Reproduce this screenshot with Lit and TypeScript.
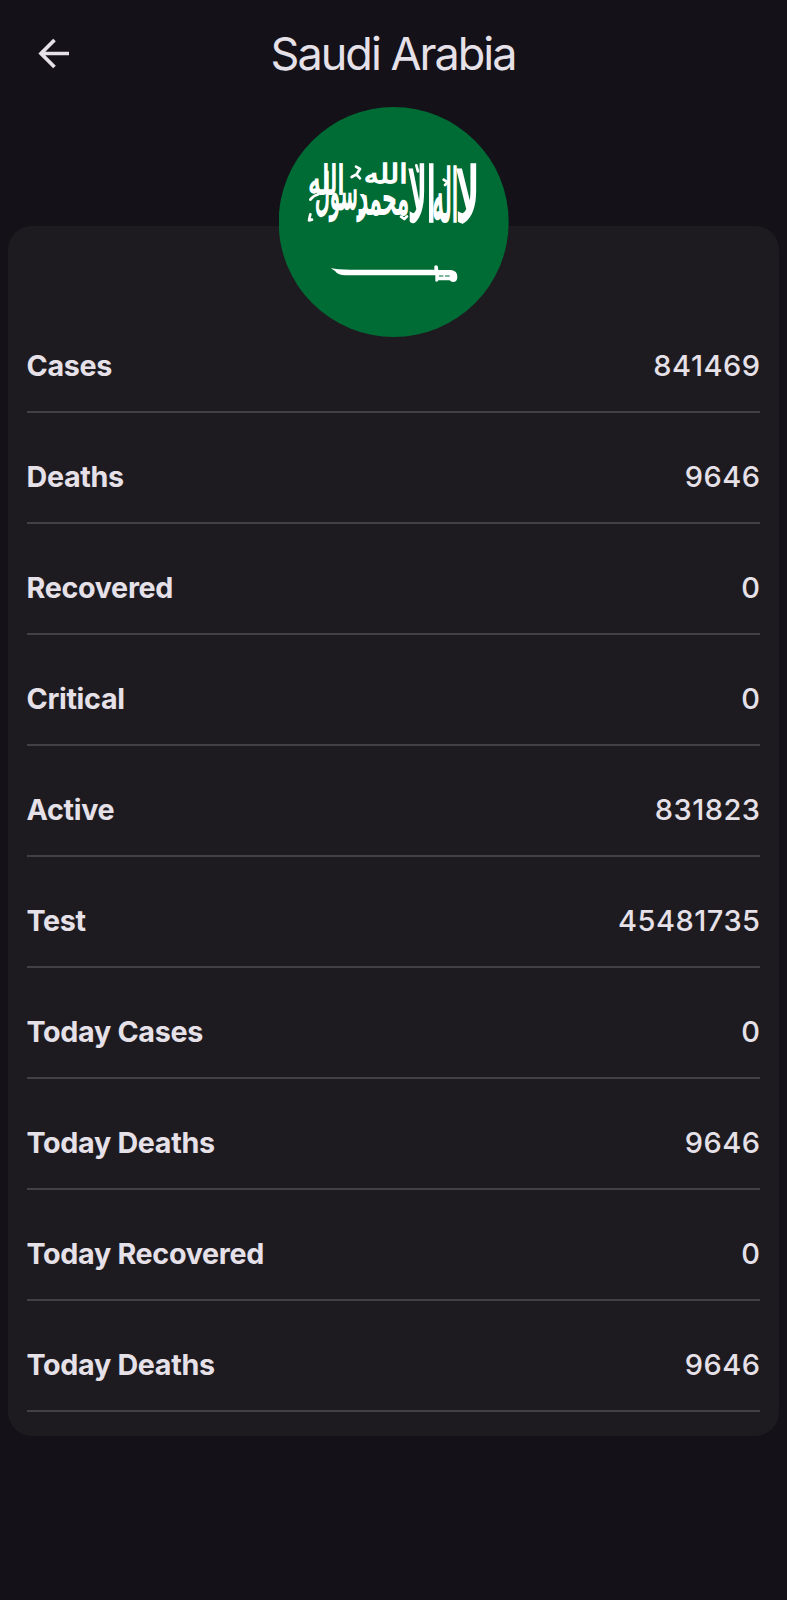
import { LitElement, html, css, svg } from "lit";
import { customElement, property } from "lit/decorators.js";

@customElement("country-flag")
class CountryFlag extends LitElement {
  static styles = css`
    :host { display: block; width: 230px; height: 230px; }
    svg { display: block; width: 100%; height: 100%; }
    .script { fill: #fff; stroke: #fff; stroke-width: 3.6; font-family: "DejaVu Sans", sans-serif; font-weight: 400; }
    .mark { fill: none; stroke: #fff; stroke-width: 8; stroke-linecap: round; stroke-linejoin: round; }
    .blade { fill: #fff; }
  `;

  // Each word: text, left, baseline, width, vertical stretch
  words: [string, number, number, number, number][] = [
    ["لا", 557, 362, 70, 2.9],
    ["اله", 486, 362, 78, 2.8],
    ["الا", 414, 362, 82, 2.9],
    ["الله", 280, 248, 132, 1.05],
    ["محمد", 262, 340, 154, 1.75],
    ["رسول", 134, 326, 158, 1.9],
    ["الله", 114, 282, 108, 1.55],
  ];

  render() {
    return html`<svg viewBox="26 20 690 690" aria-hidden="true">
      <circle cx="370" cy="365" r="345" fill="#006c35" />
      ${this.words.map(([t, x, y, w, s]) => svg`<text class="script" direction="ltr" font-size="76"
        transform="translate(${x} ${y}) scale(1 ${s})" textLength=${w} lengthAdjust="spacingAndGlyphs">${t}</text>`)}
      <g class="mark">
        <path d="M257 199l12 7-8 12M244 230l14-8 11 12" />
        <path d="M120 342l-4 18 9-2M120 298q9-12 24-16" />
        <path d="M438 195l5 18M520 238l12 8-8 8" />
        <path d="M392 349l10 7 8-8M568 360l9 6" />
      </g>
      <path class="blade" d="M181 503q20 5 60 5L492 508V497q6-4 10 0l2 12h38q19 2 19 20 0 16-13 16-6 0-10-5H504q-2 6-9 3V525H225q-21 0-31-13z" />
      <path d="M506 527h13m5 0h14" stroke="#006c35" stroke-width="3" />
    </svg>`;
  }
}

@customElement("stat-row")
class StatRow extends LitElement {
  @property() label = "";
  @property() value = "";
  static styles = css`
    :host { display: flex; justify-content: space-between; align-items: flex-start; box-sizing: border-box;
      height: 111px; padding-top: 46px; border-bottom: 2px solid #414045; font-size: 28.7px; line-height: 36px; }
    .label { font-weight: 650; letter-spacing: -0.32px; }
    .value { font-size: 29px; font-weight: 450; letter-spacing: 0.5px; margin-right: -0.5px; }
  `;
  render() {
    return html`<span class="label">${this.label}</span><span class="value">${this.value}</span>`;
  }
}

@customElement("app-root")
class AppRoot extends LitElement {
  static styles = css`
    :host { display: block; box-sizing: border-box; height: 1600px; background: #141118; color: #e6e1e8;
      font-family: Inter, "Liberation Sans", sans-serif; overflow: hidden; }
    .bar { display: grid; grid-template-columns: 109px 1fr 109px; align-items: center; height: 107px; }
    .back { display: block; width: 33px; height: 32px; margin: -1px 0 0 37px; }
    .title { margin: 0 0 0 -1px; text-align: center; font-size: 45px; font-weight: 400; line-height: 56px; letter-spacing: -2px; white-space: nowrap; }
    .flag { margin: 0 auto; position: relative; z-index: 1; }
    .card { box-sizing: border-box; height: 1210px; margin: -111px 8px 0; padding: 76px 19px 0 18.5px; border-radius: 24px; background: #1e1b20; }
  `;

  stats = [
    ["Cases", "841469"],
    ["Deaths", "9646"],
    ["Recovered", "0"],
    ["Critical", "0"],
    ["Active", "831823"],
    ["Test", "45481735"],
    ["Today Cases", "0"],
    ["Today Deaths", "9646"],
    ["Today Recovered", "0"],
    ["Today Deaths", "9646"],
  ];

  render() {
    return html`
      <header class="bar">
        <svg class="back" viewBox="0 0 33 32" fill="none" stroke="#e6e1e8" stroke-width="3.7">
          <path d="M32 16.500H4M17.500 3L4 16.500L17.500 30" />
        </svg>
        <h1 class="title">Saudi Arabia</h1>
      </header>
      <country-flag class="flag"></country-flag>
      <main class="card">
        ${this.stats.map(([l, v]) => html`<stat-row label=${l} value=${v}></stat-row>`)}
      </main>
    `;
  }
}
